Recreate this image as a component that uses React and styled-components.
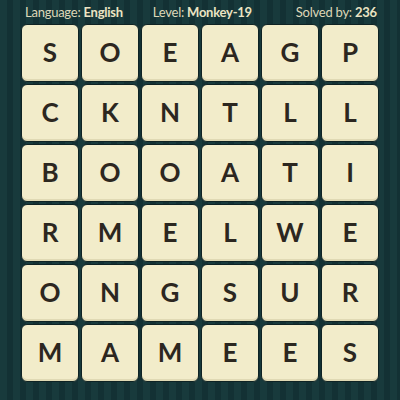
import React from "react";
import styled, { createGlobalStyle } from "styled-components";

const rows = ["SOEAGP", "CKNTLL", "BOOATI", "RMELWE", "ONGSUR", "MAMEES"];

const GlobalStyle = createGlobalStyle`
  html, body {
    margin: 0;
    padding: 0;
  }
  body {
    background: #163638;
  }
`;

const Page = styled.div`
  width: 400px;
  height: 400px;
  overflow: hidden;
  background: repeating-linear-gradient(
    90deg,
    #183a3c 0px,
    #183a3c 7px,
    #133134 7px,
    #133134 13px
  );
  font-family: Lato, "Open Sans", sans-serif;
`;

const Header = styled.div`
  height: 24px;
  display: flex;
  align-items: center;
  padding-left: 25px;
  color: #ebe4c3;
  font-size: 13px;
  letter-spacing: -0.25px;
`;

const Stat = styled.div`
  margin-left: ${props => props.$offset || 0}px;
  white-space: nowrap;
`;

const Label = styled.span`
  font-weight: 400;
  color: #ddd7b8;
`;

const Value = styled.span`
  font-weight: 700;
`;

const Board = styled.div`
  display: grid;
  grid-template-columns: repeat(6, 58px);
  grid-auto-rows: 58px;
  gap: 2px;
  padding-left: 21px;
`;

const Tile = styled.div`
  box-sizing: border-box;
  background: #f2ecca;
  border: 1px solid #0f2324;
  border-radius: 6px;
  box-shadow: inset 0 -2px 0 #e0d9b4;
  display: flex;
  align-items: center;
  justify-content: center;
  color: #2c2720;
  font-size: 26px;
  font-weight: 700;
  padding-bottom: 2px;
`;

export default function App() {
  return (
    <>
      <GlobalStyle />
      <Page>
        <Header>
          <Stat>
            <Label>Language: </Label>
            <Value>English</Value>
          </Stat>
          <Stat $offset={30}>
            <Label>Level: </Label>
            <Value>Monkey-19</Value>
          </Stat>
          <Stat $offset={44}>
            <Label>Solved by: </Label>
            <Value>236</Value>
          </Stat>
        </Header>
        <Board>
          {rows.map((row, r) =>
            row.split("").map((ch, c) => <Tile key={`${r}-${c}`}>{ch}</Tile>)
          )}
        </Board>
      </Page>
    </>
  );
}
